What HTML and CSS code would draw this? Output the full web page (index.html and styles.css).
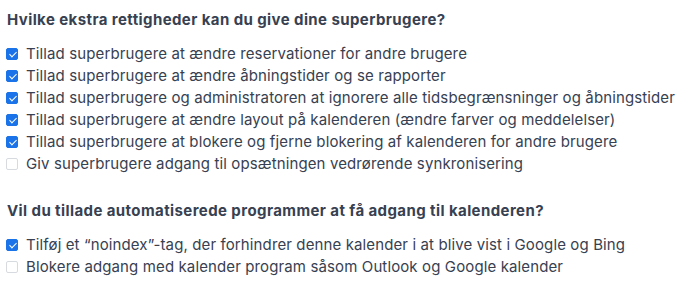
FILE: index.html
```html
<!DOCTYPE html>
<html lang="da">
<head>
<meta charset="utf-8">
<link rel="stylesheet" href="styles.css">
</head>
<body>
<div class="page">
  <section class="group">
    <h2 class="title">Hvilke ekstra rettigheder kan du give dine superbrugere?</h2>
    <ul class="options">
      <li class="option"><span class="box checked"></span><span class="label">Tillad superbrugere at ændre reservationer for andre brugere</span></li>
      <li class="option"><span class="box checked"></span><span class="label">Tillad superbrugere at ændre åbningstider og se rapporter</span></li>
      <li class="option"><span class="box checked"></span><span class="label">Tillad superbrugere og administratoren at ignorere alle tidsbegrænsninger og åbningstider</span></li>
      <li class="option"><span class="box checked"></span><span class="label">Tillad superbrugere at ændre layout på kalenderen (ændre farver og meddelelser)</span></li>
      <li class="option"><span class="box checked"></span><span class="label">Tillad superbrugere at blokere og fjerne blokering af kalenderen for andre brugere</span></li>
      <li class="option"><span class="box"></span><span class="label">Giv superbrugere adgang til opsætningen vedrørende synkronisering</span></li>
    </ul>
  </section>
  <section class="group">
    <h2 class="title">Vil du tillade automatiserede programmer at få adgang til kalenderen?</h2>
    <ul class="options">
      <li class="option"><span class="box checked"></span><span class="label">Tilføj et “noindex”-tag, der forhindrer denne kalender i at blive vist i Google og Bing</span></li>
      <li class="option"><span class="box"></span><span class="label">Blokere adgang med kalender program såsom Outlook og Google kalender</span></li>
    </ul>
  </section>
</div>
</body>
</html>
```
FILE: styles.css
```css
html, body {
  margin: 0;
  padding: 0;
  background: #ffffff;
}
body {
  font-family: Inter, "Noto Sans", "Liberation Sans", sans-serif;
  color: #374151;
}
.page {
  padding: 9px 0 0 7px;
  display: flex;
  flex-direction: column;
  gap: 25.5px;
}
.title {
  margin: 0 0 11.5px 0;
  font-size: 15px;
  line-height: 22px;
  font-weight: 700;
  letter-spacing: 0.41px;
  color: #374151;
  white-space: nowrap;
}
.options {
  list-style: none;
  margin: 0;
  padding: 0;
}
.option {
  display: flex;
  align-items: center;
  height: 22px;
  font-size: 15px;
  line-height: 22px;
  letter-spacing: 0.12px;
  white-space: nowrap;
}
.box {
  flex: none;
  width: 12px;
  height: 12px;
  box-sizing: border-box;
  border: 1px solid #d7dbe0;
  border-radius: 2px;
  background: #fff;
  margin-right: 8px;
  margin-left: -1px;
  position: relative;
}
.box.checked {
  background: #1a73e8;
  border-color: #1a73e8;
}
.box.checked::after {
  content: "";
  position: absolute;
  left: 3.5px;
  top: 1px;
  width: 3px;
  height: 6px;
  border: solid #fff;
  border-width: 0 1.8px 1.8px 0;
  transform: rotate(45deg);
}
.label {
  color: #374151;
}
```
